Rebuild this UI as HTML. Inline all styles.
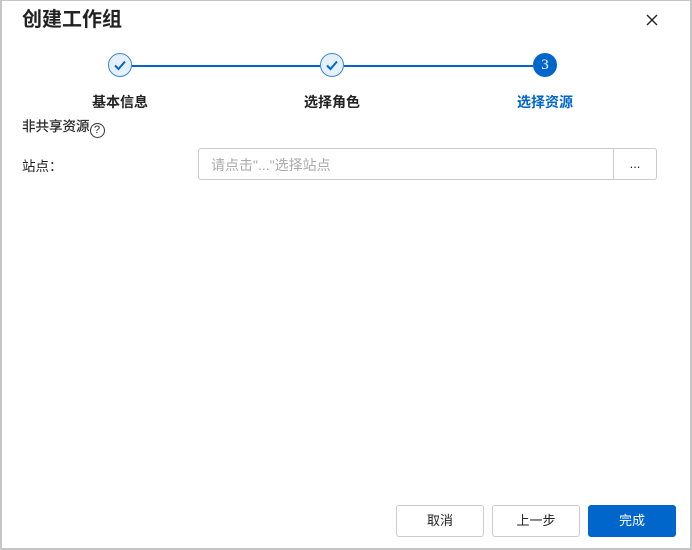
<!DOCTYPE html>
<html><head><meta charset="utf-8"><style>
*{margin:0;padding:0;box-sizing:border-box}
body{width:692px;height:550px;background:#fff;font-family:"Liberation Sans","Noto Sans CJK SC",sans-serif;position:relative;overflow:hidden}
.frame{position:absolute;left:0;top:0;width:692px;height:550px;border:2px solid #c6c6c6;border-top-width:1px}
.abs{position:absolute}
.title{left:22px;top:6px;font-size:20px;font-weight:bold;color:#222;line-height:28px}
.circ{width:24px;height:24px;border-radius:50%;top:53px}
.done{background:#e6f0fb;border:1px solid #3a86d8}
.cur{background:#0066cc;color:#fff;font-family:"Liberation Serif",serif;font-size:15px;text-align:center;line-height:24px}
.line{height:1.5px;background:#0066cc;top:65px}
.lab{top:92px;font-size:14px;font-weight:bold;color:#222;width:120px;text-align:center;line-height:20px}
.btn{top:505px;height:32px;width:88px;border:1px solid #ccc;border-radius:3px;font-size:13px;color:#222;text-align:center;line-height:30px;background:#fff}
</style></head><body>
<div class="frame"></div>
<div class="abs title">创建工作组</div>
<svg class="abs" style="left:645px;top:13px" width="14" height="14" viewBox="0 0 14 14"><path d="M2 2L12 12M12 2L2 12" stroke="#222" stroke-width="1.4"/></svg>
<div class="abs line" style="left:132px;width:188px"></div>
<div class="abs line" style="left:344px;width:189px"></div>
<div class="abs circ done" style="left:108px"><svg width="22" height="22" viewBox="0 0 22 22"><path d="M6 11.5L9.5 15L16 7.5" fill="none" stroke="#0066cc" stroke-width="2"/></svg></div>
<div class="abs circ done" style="left:320px"><svg width="22" height="22" viewBox="0 0 22 22"><path d="M6 11.5L9.5 15L16 7.5" fill="none" stroke="#0066cc" stroke-width="2"/></svg></div>
<div class="abs circ cur" style="left:533px">3</div>
<div class="abs lab" style="left:60px">基本信息</div>
<div class="abs lab" style="left:272px">选择角色</div>
<div class="abs lab" style="left:485px;color:#0066cc">选择资源</div>
<div class="abs" style="left:22px;top:118px;font-size:13.5px;color:#222;line-height:18px;-webkit-text-stroke:0.2px #222">非共享资源<span style="display:inline-block;width:15px;height:15px;border:1px solid #333;border-radius:50%;font-size:11px;text-align:center;line-height:13px;vertical-align:-2px;-webkit-text-stroke:0">?</span></div>
<div class="abs" style="left:22px;top:155px;font-size:13.5px;color:#222">站点：</div>
<div class="abs" style="left:198px;top:148px;width:459px;height:32px;border:1px solid #ccc;border-radius:3px">
<div class="abs" style="left:12px;top:6px;font-size:14px;color:#aaa">请点击"..."选择站点</div>
<div class="abs" style="left:414px;top:0;width:43px;height:30px;border-left:1px solid #ccc;text-align:center;font-size:13px;line-height:30px;color:#222">...</div>
</div>
<div class="abs btn" style="left:396px">取消</div>
<div class="abs btn" style="left:492px">上一步</div>
<div class="abs btn" style="left:588px;background:#0066cc;border-color:#0066cc;color:#fff">完成</div>
</body></html>
